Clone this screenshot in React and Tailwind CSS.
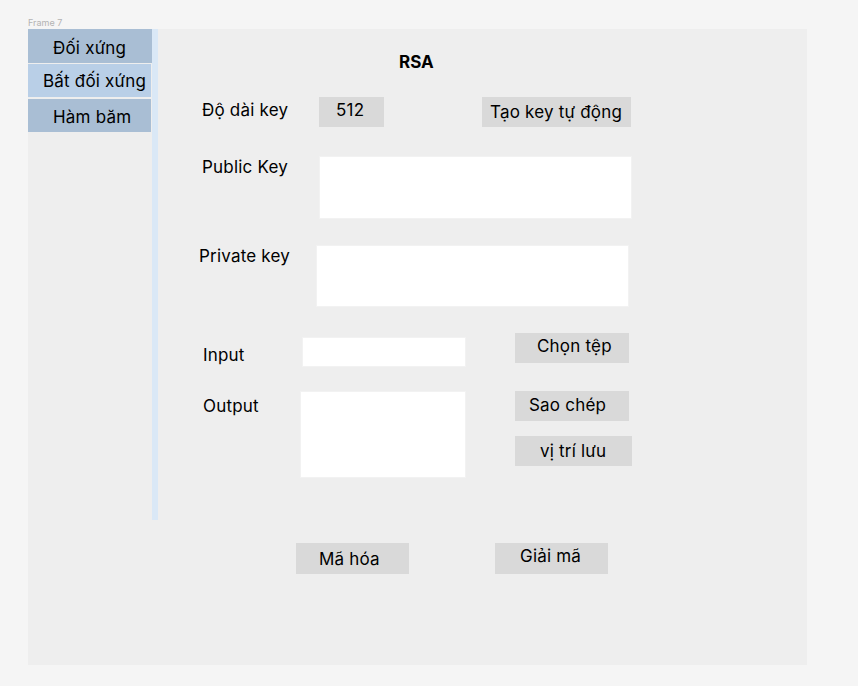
export default function App() {
  const font = { fontFamily: "Inter, 'Noto Sans', sans-serif" };
  return (
    <div
      className="w-[858px] h-[686px] bg-[#f5f5f5] pt-[16px] pl-[28px] text-black overflow-hidden"
      style={font}
    >
      <div className="text-[9px] leading-[13px] h-[13px] text-[#b3b3b3]">Frame 7</div>
      <div className="flex w-[779px] h-[636px] bg-[#eeeeee]">
        {/* Sidebar */}
        <div className="w-[124px] shrink-0 flex flex-col text-[17px] leading-[20px] tracking-[0.2px]">
          <div className="h-[34px] w-[124px] bg-[#a9bed4] pt-[9px] pl-[25px]">Đối xứng</div>
          <div className="mt-[1px] h-[33px] w-[123px] bg-[#b9cfe7] pt-[7px] pl-[15px]">Bất đối xứng</div>
          <div className="mt-[2px] h-[33px] w-[123px] bg-[#a9bed4] pt-[8px] pl-[25px]">Hàm băm</div>
        </div>
        <div className="w-[6px] h-[491px] shrink-0 bg-[#dae8f6]" />

        {/* Content */}
        <div className="flex flex-col text-[17px] leading-[20px] tracking-[0.2px]">
          <div className="mt-[23px] ml-[241px] font-bold tracking-normal">RSA</div>

          {/* Row 1 */}
          <div className="mt-[25px] flex items-start">
            <div className="ml-[44px] w-[117px] mt-[3px]">Độ dài key</div>
            <div className="w-[65px] h-[30px] bg-[#d9d9d9] pt-[3px] pl-[17px]">512</div>
            <div className="ml-[98px] w-[149px] h-[30px] bg-[#d9d9d9] pt-[5px] pl-[8px]">Tạo key tự động</div>
          </div>

          {/* Row 2 */}
          <div className="mt-[29px] flex items-start">
            <div className="ml-[44px] w-[117px] mt-[1px]">Public Key</div>
            <div className="w-[313px] h-[63px] bg-white border border-[#f2f2f2]" />
          </div>

          {/* Row 3 */}
          <div className="mt-[26px] flex items-start">
            <div className="ml-[41px] w-[117px] mt-[1px]">Private key</div>
            <div className="w-[313px] h-[62px] bg-white border border-[#f2f2f2]" />
          </div>

          {/* Row 4 */}
          <div className="mt-[26px] flex items-start">
            <div className="ml-[45px] w-[99px] mt-[12px]">Input</div>
            <div className="mt-[4px] w-[164px] h-[30px] bg-white border border-[#f2f2f2]" />
            <div className="ml-[49px] w-[114px] h-[30px] bg-[#d9d9d9] pt-[3px] pl-[22px]">Chọn tệp</div>
          </div>

          {/* Row 5 */}
          <div className="mt-[24px] flex items-start">
            <div className="ml-[45px] w-[97px] mt-[5px]">Output</div>
            <div className="w-[166px] h-[87px] bg-white border border-[#f2f2f2]" />
            <div className="ml-[49px] flex flex-col gap-[15px]">
              <div className="w-[114px] h-[30px] bg-[#d9d9d9] pt-[4px] pl-[14px]">Sao chép</div>
              <div className="w-[117px] h-[30px] bg-[#d9d9d9] pt-[5px] pl-[25px]">vị trí lưu</div>
            </div>
          </div>

          {/* Row 6 */}
          <div className="mt-[65px] flex items-start">
            <div className="ml-[138px] w-[113px] h-[31px] bg-[#d9d9d9] pt-[6px] pl-[23px]">Mã hóa</div>
            <div className="ml-[86px] w-[113px] h-[31px] bg-[#d9d9d9] pt-[3px] pl-[25px]">Giải mã</div>
          </div>
        </div>
      </div>
    </div>
  );
}
